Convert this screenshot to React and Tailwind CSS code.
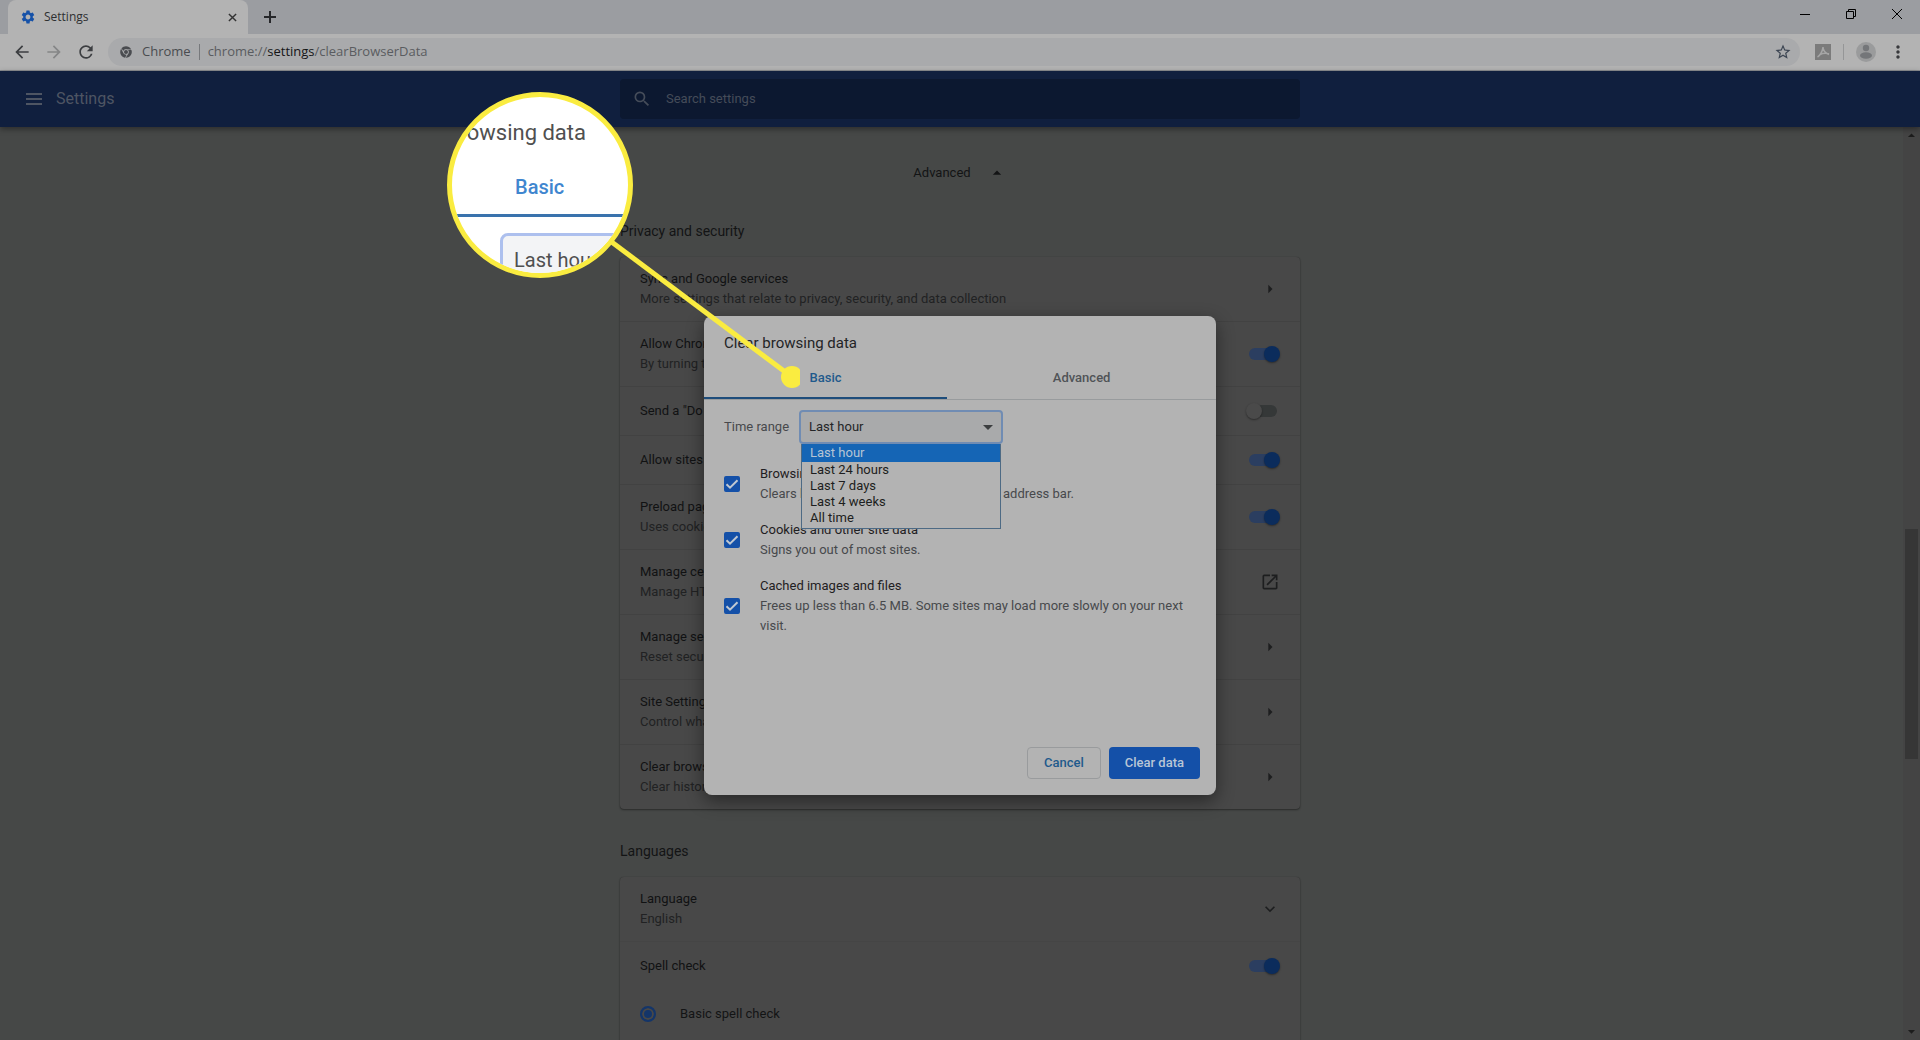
import { useState } from 'react'
import {
  MdArrowBack,
  MdArrowForward,
  MdRefresh,
  MdSettings,
  MdMenu,
  MdSearch,
  MdStarBorder,
  MdMoreVert,
  MdOpenInNew,
  MdExpandMore,
  MdArrowRight,
  MdArrowDropUp,
  MdArrowDropDown,
} from 'react-icons/md'
import { FaChrome } from 'react-icons/fa'

const PRIVACY_ROWS = [
  { title: 'Sync and Google services', note: 'More settings that relate to privacy, security, and data collection', control: 'arrow' },
  { title: 'Allow Chrome sign-in', note: 'By turning this off, you can sign in to Google sites without signing in to Chrome', control: 'switch', on: true },
  { title: 'Send a "Do Not Track" request with your browsing traffic', control: 'switch', on: false },
  { title: 'Allow sites to check if you have payment methods saved', control: 'switch', on: true },
  { title: 'Preload pages for faster browsing and searching', note: 'Uses cookies to remember your preferences', control: 'switch', on: true },
  { title: 'Manage certificates', note: 'Manage HTTPS/SSL certificates and settings', control: 'external' },
  { title: 'Manage security keys', note: 'Reset security keys and create PINs', control: 'arrow' },
  { title: 'Site Settings', note: 'Control what information websites can use', control: 'arrow' },
  { title: 'Clear browsing data', note: 'Clear history, cookies, cache, and more', control: 'arrow' },
]

const TIME_RANGES = ['Last hour', 'Last 24 hours', 'Last 7 days', 'Last 4 weeks', 'All time']

const DATA_TYPES = [
  { id: 'history', title: 'Browsing history', note: 'Clears history and autocompletions in the address bar.' },
  { id: 'cookies', title: 'Cookies and other site data', note: 'Signs you out of most sites.' },
  { id: 'cache', title: 'Cached images and files', note: 'Frees up less than 6.5 MB. Some sites may load more slowly on your next visit.' },
]

function TabStrip() {
  return (
    <div className="flex h-[34px] items-stretch bg-[#9b9da1] pl-2">
      <div className="flex w-60 items-center rounded-t-lg bg-[#b3b3b3] pr-2 pl-3">
        <MdSettings className="h-4 w-4 text-[#1551a8]" />
        <span className="ml-2 flex-1 text-xs text-[#2e2f31]">Settings</span>
        <button type="button" aria-label="Close tab" className="flex h-4 w-4 items-center justify-center text-[#333]">
          <svg viewBox="0 0 10 10" fill="none" stroke="currentColor" strokeWidth="1.6" className="h-[9px] w-[9px]">
            <path d="M1 1l8 8M9 1l-8 8" />
          </svg>
        </button>
      </div>
      <button type="button" aria-label="New tab" className="ml-2 flex w-7 items-center justify-center text-[#26272a]">
        <svg viewBox="0 0 12 12" fill="none" stroke="currentColor" strokeWidth="2" className="h-3 w-3">
          <path d="M6 0v12M0 6h12" />
        </svg>
      </button>
      <div className="ml-auto flex h-7 text-black">
        <button type="button" aria-label="Minimize" className="flex w-[46px] items-center justify-center">
          <svg viewBox="0 0 10 10" className="h-[10px] w-[10px]">
            <path d="M0 5.5h10" stroke="currentColor" />
          </svg>
        </button>
        <button type="button" aria-label="Restore" className="flex w-[46px] items-center justify-center">
          <svg viewBox="0 0 10 10" fill="none" stroke="currentColor" className="h-[10px] w-[10px]">
            <path d="M.5 2.5h7v7h-7zM2.5 2.5v-2h7v7h-2" />
          </svg>
        </button>
        <button type="button" aria-label="Close" className="flex w-[46px] items-center justify-center">
          <svg viewBox="0 0 10 10" fill="none" stroke="currentColor" className="h-[10px] w-[10px]">
            <path d="M0 0l10 10M10 0L0 10" />
          </svg>
        </button>
      </div>
    </div>
  )
}

function Toolbar() {
  return (
    <div className="flex h-[37px] items-center border-b border-[#8d8f92] bg-[#b3b3b3] pr-3 pl-3">
      <div className="flex gap-3 text-[#3c3e41]">
        <button type="button" aria-label="Back"><MdArrowBack className="h-5 w-5" /></button>
        <button type="button" aria-label="Forward" className="text-[#858687]"><MdArrowForward className="h-5 w-5" /></button>
        <button type="button" aria-label="Reload"><MdRefresh className="h-5 w-5" /></button>
      </div>
      <div className="ml-3 flex h-7 flex-1 items-center rounded-full bg-[#a9aaac] pr-2 pl-3 text-[13px] text-[#4a4c50]">
        <FaChrome className="h-3 w-3" />
        <span className="ml-[10px]">Chrome</span>
        <span className="mx-2 h-4 w-px bg-[#77797c]" />
        <span className="flex-1 text-[#5a5c60]">
          chrome://<span className="text-[#151517]">settings</span>/clearBrowserData
        </span>
        <button type="button" aria-label="Bookmark this page"><MdStarBorder className="h-[18px] w-[18px] text-[#3c4552]" /></button>
      </div>
      <button type="button" aria-label="Adobe Acrobat" className="ml-[15px] h-4 w-4 bg-[#7b7b7b]">
        <svg viewBox="0 0 16 16" fill="none" stroke="#a6a6a6" strokeWidth="1.5" className="h-4 w-4">
          <path d="M2.500 13c2-1 5-5 5.500-10c0 3 2.500 6 6 7.500M5 10.500c2.500-1.200 5.500-1.500 9-.8" />
        </svg>
      </button>
      <span className="mx-3 h-4 w-px bg-[#959697]" />
      <button type="button" aria-label="Profile">
        <svg viewBox="0 0 20 20" className="h-5 w-5">
          <circle cx="10" cy="10" r="10" fill="#9a9b9c" />
          <circle cx="10" cy="6" r="3.200" fill="#747679" />
          <ellipse cx="10" cy="13.500" rx="6" ry="3.300" fill="#747679" />
        </svg>
      </button>
      <button type="button" aria-label="Menu" className="ml-3"><MdMoreVert className="h-5 w-5 text-[#38393c]" /></button>
    </div>
  )
}

function Header() {
  return (
    <header className="relative grid h-14 shrink-0 grid-cols-[1fr_680px_1fr] items-center bg-[#101f3e] shadow-[0_2px_6px_rgba(0,0,0,0.4)]">
      <div className="flex items-center pl-[26px] text-[#4e5563]">
        <button type="button" aria-label="Main menu">
          <svg viewBox="0 0 16 12" className="h-3 w-4">
            <path d="M0 1h16M0 6h16M0 11h16" stroke="currentColor" strokeWidth="2" />
          </svg>
        </button>
        <h1 className="ml-[14px] text-base">Settings</h1>
      </div>
      <label className="flex h-10 items-center rounded-sm bg-[#0c1830] pl-3 text-[#454c59]">
        <MdSearch className="h-5 w-5" />
        <input
          type="text"
          aria-label="Search settings"
          placeholder="Search settings"
          className="ml-[14px] flex-1 bg-transparent text-[13px] outline-none placeholder:text-[#454c59]"
        />
      </label>
    </header>
  )
}

function Switch({ on, label }) {
  return (
    <input
      type="checkbox"
      role="switch"
      aria-label={label}
      defaultChecked={on}
      className="relative mr-[3px] h-3 w-7 shrink-0 appearance-none rounded-full bg-[#353838] before:absolute before:-top-[2px] before:-left-[3px] before:h-4 before:w-4 before:rounded-full before:bg-[#4a4a4a] before:shadow-[0_1px_2px_rgba(0,0,0,0.4)] checked:bg-[#2b3e60] checked:before:left-[15px] checked:before:bg-[#0b2c5c]"
    />
  )
}

function RowControl({ row }) {
  if (row.control === 'switch') return <Switch on={row.on} label={row.title} />
  const Icon = row.control === 'external' ? MdOpenInNew : row.control === 'expand' ? MdExpandMore : MdArrowRight
  return (
    <button type="button" aria-label={row.title}>
      <Icon className="h-5 w-5 text-[#1d1e1f]" />
    </button>
  )
}

function Row({ row }) {
  return (
    <div className={`flex items-center justify-between px-5 ${row.note ? 'py-3' : 'py-3.5'}`}>
      <div className="leading-5">
        <div className="text-[#111213]">{row.title}</div>
        {row.note && <div className="text-[#212223]">{row.note}</div>}
      </div>
      <RowControl row={row} />
    </div>
  )
}

function Section({ title, children }) {
  return (
    <section className="mb-2">
      <h2 className="flex h-[60px] items-center pt-2 text-sm text-[#131415]">{title}</h2>
      <div className="rounded bg-[#484848] shadow-[0_1px_2px_rgba(0,0,0,0.4),0_0_1px_rgba(0,0,0,0.3)]">{children}</div>
    </section>
  )
}

function SettingsPage() {
  return (
    <div className="flex min-h-0 flex-1 bg-[#464847] pl-[17px]">
      <main className="mx-auto w-[680px] pt-[22px]">
        <button type="button" className="mx-auto flex h-12 items-center gap-4 text-[#131415]">
          Advanced
          <MdArrowDropUp className="h-5 w-5" />
        </button>
        <Section title="Privacy and security">
          <div>
            {PRIVACY_ROWS.map((row) => (
              <div key={row.title} className="border-t border-[#424242] first:border-t-0">
                <Row row={row} />
              </div>
            ))}
          </div>
        </Section>
        <Section title="Languages">
          <Row row={{ title: 'Language', note: 'English', control: 'expand' }} />
          <div className="border-t border-[#454545]">
            <Row row={{ title: 'Spell check', control: 'switch', on: true }} />
          </div>
          <label className="flex h-14 items-start gap-6 px-5 pt-[14px] leading-5 text-[#131415]">
            <input
              type="radio"
              name="spellcheck"
              defaultChecked
              className="mt-[2px] h-4 w-4 appearance-none rounded-full border-2 border-[#143569] bg-[#143569] shadow-[inset_0_0_0_2px_#484848]"
            />
            Basic spell check
          </label>
        </Section>
      </main>
      <div className="flex w-[17px] flex-col items-center justify-between bg-[#444444] text-[#1c1c1c]">
        <MdArrowDropUp className="h-[17px] w-[17px]" />
        <div className="mt-[385px] mb-auto h-[230px] w-[13px] bg-[#363636]" />
        <MdArrowDropDown className="h-[17px] w-[17px]" />
      </div>
    </div>
  )
}

function TimeRange() {
  const [range, setRange] = useState(TIME_RANGES[0])

  return (
    <div className="flex items-center gap-[10px]">
      <label htmlFor="time-range" className="text-[#47494c]">Time range</label>
      <div className="relative">
        <select
          id="time-range"
          value={range}
          onChange={(e) => setRange(e.target.value)}
          className="block h-[34px] w-[204px] appearance-none rounded border-2 border-[#708cb3] bg-[#a9aaab] px-2 text-[#242527]"
        >
          {TIME_RANGES.map((name) => (
            <option key={name}>{name}</option>
          ))}
        </select>
        <svg viewBox="0 0 10 5" className="absolute top-[15px] right-[10px] h-[5px] w-[10px]">
          <path d="M0 0h10L5 5z" fill="#3c3e40" />
        </svg>
        <ul role="listbox" className="absolute top-full left-[2px] z-10 w-[200px] border-x border-b border-[#4d6a84] bg-[#b3b3b3] pb-[2px] text-[#1d1e20]">
          {TIME_RANGES.map((name) => (
            <li
              key={name}
              role="option"
              aria-selected={name === range}
              onClick={() => setRange(name)}
              className={`px-2 ${name === range ? 'bg-[#1565b5] leading-[18px] text-[#b5c4d4]' : 'leading-4'}`}
            >
              {name}
            </li>
          ))}
        </ul>
      </div>
    </div>
  )
}

function DataCheckbox({ item }) {
  return (
    <label className="flex items-center gap-5">
      <span className="grid shrink-0">
        <input
          type="checkbox"
          defaultChecked
          className="peer col-start-1 row-start-1 h-4 w-4 appearance-none rounded-xs border-2 border-[#47494c] checked:border-[#1450a8] checked:bg-[#1450a8]"
        />
        <svg
          viewBox="0 0 16 16"
          fill="none"
          stroke="#c0c8d2"
          strokeWidth="2"
          className="invisible col-start-1 row-start-1 h-4 w-4 peer-checked:visible"
        >
          <path d="M2.500 8.200l3.500 3.500 7.500-7.500" />
        </svg>
      </span>
      <span className="leading-5">
        <span className="block text-[#1f2022]">{item.title}</span>
        <span className="block text-[#47494c]">{item.note}</span>
      </span>
    </label>
  )
}

function ClearDataDialog() {
  return (
    <div role="dialog" aria-label="Clear browsing data" className="flex min-h-[479px] w-lg flex-col rounded-lg bg-[#b3b3b3] shadow-[0_6px_18px_rgba(0,0,0,0.45)]">
      <h2 className="px-5 pt-4 text-[15px] leading-[22px] text-[#232426]">Clear browsing data</h2>
      <div role="tablist" className="mt-1 flex h-[42px] border-b border-[#989b9d] font-medium">
        <button type="button" role="tab" aria-selected="true" className="flex-auto border-b-2 border-[#1e4d7b] text-[#1f5a8c]">
          Basic
        </button>
        <button type="button" role="tab" aria-selected="false" className="flex-auto border-b-2 border-transparent text-[#505357]">
          Advanced
        </button>
      </div>
      <div className="flex-1 px-5 pt-[10px]">
        <TimeRange />
        <div className="mt-5 flex flex-col gap-4">
          {DATA_TYPES.map((item) => (
            <DataCheckbox key={item.id} item={item} />
          ))}
        </div>
      </div>
      <div className="flex justify-end gap-2 p-4 font-medium">
        <button type="button" className="h-8 rounded border border-[#999b9d] px-4 text-[#1f5a8c]">
          Cancel
        </button>
        <button type="button" className="h-8 rounded bg-[#1450a8] px-4 text-[#b9c6d6]">
          Clear data
        </button>
      </div>
    </div>
  )
}

// Magnified callout pointing at the Basic tab
function Callout() {
  return (
    <div className="pointer-events-none absolute top-0 left-1/2 z-20 font-['Roboto',sans-serif]" aria-hidden="true">
      <svg viewBox="0 0 200 160" className="absolute top-[232px] -left-[360px] h-[160px] w-[200px]">
        <path d="M9 8L192 145" stroke="#faec40" strokeWidth="5" />
        <circle cx="192" cy="145" r="11" fill="#faec40" />
      </svg>
      <div className="absolute top-[92px] -left-[513px] flex h-[186px] w-[186px] flex-col overflow-hidden rounded-full border-5 border-[#faec40] bg-white text-[#505050]">
        <div className="flex h-[74px] shrink-0 justify-end pt-[22px] pr-[42px] text-[22px] leading-7 whitespace-nowrap">
          Clear browsing data
        </div>
        <div className="h-[46px] shrink-0 border-b-3 border-[#3a73ad] pt-[2px] pl-[63px] text-xl leading-7 font-medium text-[#3f86cf]">
          Basic
        </div>
        <div className="mt-4 ml-12 h-20 w-60 shrink-0 rounded-lg border-3 border-[#adc0ee] bg-[#f3f4f6] pt-[10px] pl-[11px] text-xl leading-7">
          Last hour
        </div>
      </div>
    </div>
  )
}

export default function App() {
  return (
    <div className="relative flex h-screen flex-col overflow-hidden">
      <div className="shrink-0 font-['Open_Sans',sans-serif]">
        <TabStrip />
        <Toolbar />
      </div>
      <div className="relative flex min-h-0 flex-1 flex-col font-['Roboto',sans-serif] text-[13px]">
        <Header />
        <SettingsPage />
        <div className="absolute inset-0 flex items-center justify-center">
          <ClearDataDialog />
        </div>
      </div>
      <Callout />
    </div>
  )
}
